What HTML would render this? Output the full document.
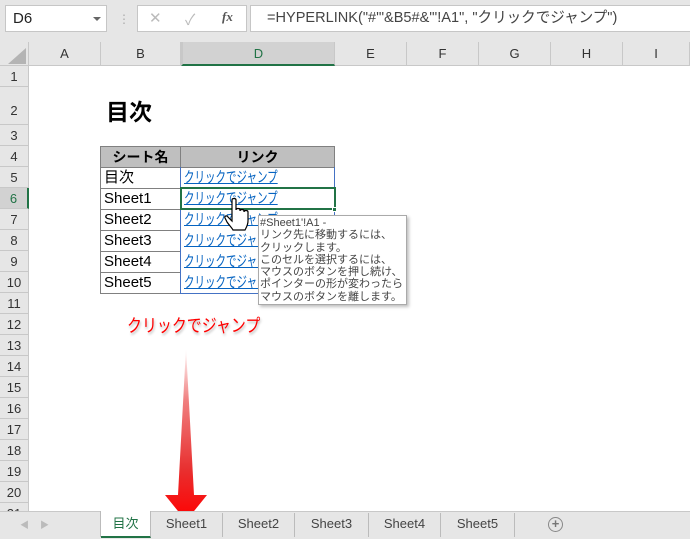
<!DOCTYPE html>
<html><head><meta charset="utf-8"><style>
*{margin:0;padding:0;box-sizing:border-box}
body{width:690px;height:539px;overflow:hidden;background:#fff;position:relative;font-family:"Liberation Sans","Noto Sans CJK JP",sans-serif}
.a{position:absolute}
.ch{position:absolute;top:42px;height:24px;background:#e6e6e6;border-right:1px solid #c8c8c8;border-bottom:1px solid #c8c8c8;font-size:13px;color:#333;text-align:center;line-height:23px}
.rh{position:absolute;left:0;width:29px;background:#e6e6e6;border-bottom:1px solid #c8c8c8;border-right:1px solid #c8c8c8;font-size:13px;color:#333;text-align:center}
.cell{position:absolute;font-size:15px;line-height:20px;white-space:nowrap}
.lk{color:#0563c1;text-decoration:underline;font-size:15px;transform:scaleX(.7);transform-origin:0 0}
.tab{position:absolute;top:513px;height:24px;font-size:13px;color:#444;line-height:22px;text-align:center;border-right:1px solid #bbb}
</style></head><body>
<div class="a" style="left:0;top:0;width:690px;height:42px;background:#e6e6e6"></div>
<div class="a" style="left:5px;top:5px;width:102px;height:27px;background:#fff;border:1px solid #c6c6c6;font-size:15px;line-height:25px;padding-left:7px;color:#222">D6</div>
<div class="a" style="left:93px;top:17px;width:0;height:0;border-left:4px solid transparent;border-right:4px solid transparent;border-top:4px solid #666"></div>
<div class="a" style="left:118px;top:10px;font-size:12px;color:#aaa;line-height:18px">⋮</div>
<div class="a" style="left:137px;top:5px;width:110px;height:27px;background:#fff;border:1px solid #c6c6c6"></div>
<div class="a" style="left:149px;top:9px;font-size:15px;color:#bbb">✕</div>
<div class="a" style="left:185px;top:9px;font-size:15px;color:#bbb">✓</div>
<div class="a" style="left:222px;top:9px;font-size:13px;font-style:italic;font-weight:bold;font-family:'Liberation Serif',serif;color:#555">fx</div>
<div class="a" style="left:250px;top:5px;width:440px;height:27px;background:#fff;border:1px solid #c6c6c6;border-right:none"></div>
<div class="a" style="left:267px;top:6px;font-size:15px;line-height:24px;color:#444;white-space:nowrap;transform:scaleX(.97);transform-origin:0 0">=HYPERLINK("#'"&amp;B5#&amp;"'!A1", "クリックでジャンプ")</div>
<div class="ch" style="left:0;width:29px"></div>
<div class="a" style="left:8px;top:48px;width:0;height:0;border-left:18px solid transparent;border-bottom:16px solid #b4b4b4"></div>
<div class="ch" style="left:29px;width:72px">A</div>
<div class="ch" style="left:101px;width:80px">B</div>
<div class="ch" style="left:181px;width:154px;background:#d2d2d2;color:#217346;border-bottom:2px solid #217346;border-left:2px solid #c8c8c8">D</div>
<div class="ch" style="left:335px;width:72px">E</div>
<div class="ch" style="left:407px;width:72px">F</div>
<div class="ch" style="left:479px;width:72px">G</div>
<div class="ch" style="left:551px;width:72px">H</div>
<div class="ch" style="left:623px;width:67px">I</div>
<div class="rh" style="top:66px;height:21px;line-height:21px">1</div>
<div class="rh" style="top:87px;height:38px;line-height:48px">2</div>
<div class="rh" style="top:125px;height:21px;line-height:21px">3</div>
<div class="rh" style="top:146px;height:21px;line-height:21px">4</div>
<div class="rh" style="top:167px;height:21px;line-height:21px">5</div>
<div class="rh" style="top:188px;height:21px;line-height:21px;background:#d2d2d2;color:#217346;border-right:2px solid #217346">6</div>
<div class="rh" style="top:209px;height:21px;line-height:21px">7</div>
<div class="rh" style="top:230px;height:21px;line-height:21px">8</div>
<div class="rh" style="top:251px;height:21px;line-height:21px">9</div>
<div class="rh" style="top:272px;height:21px;line-height:21px">10</div>
<div class="rh" style="top:293px;height:21px;line-height:21px">11</div>
<div class="rh" style="top:314px;height:21px;line-height:21px">12</div>
<div class="rh" style="top:335px;height:21px;line-height:21px">13</div>
<div class="rh" style="top:356px;height:21px;line-height:21px">14</div>
<div class="rh" style="top:377px;height:21px;line-height:21px">15</div>
<div class="rh" style="top:398px;height:21px;line-height:21px">16</div>
<div class="rh" style="top:419px;height:21px;line-height:21px">17</div>
<div class="rh" style="top:440px;height:21px;line-height:21px">18</div>
<div class="rh" style="top:461px;height:21px;line-height:21px">19</div>
<div class="rh" style="top:482px;height:21px;line-height:21px">20</div>
<div class="rh" style="top:503px;height:10px;line-height:21px;overflow:hidden">21</div>
<div class="a" style="left:106px;top:93px;font-size:23px;font-weight:bold">目次</div>
<div class="a" style="left:100px;top:146px;width:235px;height:148px;border:1px solid #808080"></div>
<div class="a" style="left:101px;top:147px;width:233px;height:20px;background:#bfbfbf"></div>
<div class="a" style="left:180px;top:146px;width:1px;height:148px;background:#808080"></div>
<div class="cell" style="left:101px;top:147px;width:79px;text-align:center;font-weight:bold;font-size:14px">シート名</div>
<div class="cell" style="left:181px;top:147px;width:153px;text-align:center;font-weight:bold;font-size:14px">リンク</div>
<div class="a" style="left:100px;top:167px;width:235px;height:1px;background:#808080"></div>
<div class="a" style="left:100px;top:188px;width:81px;height:1px;background:#808080"></div>
<div class="a" style="left:100px;top:209px;width:81px;height:1px;background:#808080"></div>
<div class="a" style="left:100px;top:230px;width:81px;height:1px;background:#808080"></div>
<div class="a" style="left:100px;top:251px;width:81px;height:1px;background:#808080"></div>
<div class="a" style="left:100px;top:272px;width:81px;height:1px;background:#808080"></div>
<div class="a" style="left:180px;top:167px;width:155px;height:127px;border:1px solid #4472c4;border-top:none"></div>
<div class="cell" style="left:104px;top:168px">目次</div>
<div class="cell" style="left:104px;top:189px">Sheet1</div>
<div class="cell" style="left:104px;top:210px">Sheet2</div>
<div class="cell" style="left:104px;top:231px">Sheet3</div>
<div class="cell" style="left:104px;top:252px">Sheet4</div>
<div class="cell" style="left:104px;top:273px">Sheet5</div>
<div class="cell lk" style="left:184px;top:168px">クリックでジャンプ</div>
<div class="cell lk" style="left:184px;top:189px">クリックでジャンプ</div>
<div class="cell lk" style="left:184px;top:210px">クリックでジャンプ</div>
<div class="cell lk" style="left:184px;top:231px">クリックでジャンプ</div>
<div class="cell lk" style="left:184px;top:252px">クリックでジャンプ</div>
<div class="cell lk" style="left:184px;top:273px">クリックでジャンプ</div>
<div class="a" style="left:180px;top:187px;width:156px;height:23px;border:2px solid #217346"></div>
<div class="a" style="left:332px;top:207px;width:5px;height:5px;background:#217346;border:1px solid #fff"></div>
<svg class="a" style="left:224px;top:198px" width="30" height="34" viewBox="0 0 30 34"><path d="M8 2c0-2 4-2 4 0v10c0-2 4-2 4 0v1c0-2 4-2 4 0v1c0-2 4-2 4 0v9c0 4-2 7-3 9H9c-1-2-4-5-6-8l-2-4c-1-2 2-3 3-1l4 4z" fill="#fff" stroke="#000" stroke-width="1.2"/></svg>
<div class="a" style="left:258px;top:215px;width:149px;height:90px;background:#fff;border:1px solid #aaa;box-shadow:2px 2px 3px rgba(0,0,0,.25);font-size:11px;line-height:12.3px;color:#444;padding:1px 0 0 1px;white-space:nowrap;overflow:hidden">#Sheet1'!A1 -<br>リンク先に移動するには、<br>クリックします。<br>このセルを選択するには、<br>マウスのボタンを押し続け、<br>ポインターの形が変わったら<br>マウスのボタンを離します。</div>
<div class="a" style="left:127px;top:312px;font-size:18px;color:#f00;text-shadow:1px 2px 3px rgba(0,0,0,.3);white-space:nowrap;transform:scaleX(.83);transform-origin:0 0">クリックでジャンプ</div>
<svg class="a" style="left:160px;top:345px" width="55" height="180"><defs><linearGradient id="g" x1="0" y1="0" x2="0" y2="1"><stop offset="0" stop-color="#fff"/><stop offset=".3" stop-color="#f08080"/><stop offset=".7" stop-color="#e83030"/><stop offset="1" stop-color="#f00"/></linearGradient></defs><path d="M26 3 L34 150 L47 150 L26 176 L5 150 L18 150 Z" fill="url(#g)"/></svg>
<div class="a" style="left:0;top:511px;width:690px;height:28px;background:#e6e6e6;border-top:1px solid #c8c8c8"></div>
<div class="a" style="left:20px;top:518px;font-size:9px;color:#bbb">◀</div>
<div class="a" style="left:40px;top:518px;font-size:9px;color:#bbb">▶</div>
<div class="a" style="left:100px;top:511px;width:1px;height:26px;background:#bbb"></div>
<div class="tab" style="left:101px;top:511px;width:50px;height:27px;background:#fff;color:#217346;border-bottom:2px solid #217346;line-height:25px">目次</div>
<div class="tab" style="left:151px;width:72px">Sheet1</div>
<div class="tab" style="left:223px;width:72px">Sheet2</div>
<div class="tab" style="left:295px;width:74px">Sheet3</div>
<div class="tab" style="left:369px;width:72px">Sheet4</div>
<div class="tab" style="left:441px;width:74px">Sheet5</div>
<div class="a" style="left:548px;top:517px;width:15px;height:15px;border:1.5px solid #888;border-radius:50%;font-size:13px;line-height:11px;text-align:center;color:#777;font-weight:bold">+</div>
</body></html>
